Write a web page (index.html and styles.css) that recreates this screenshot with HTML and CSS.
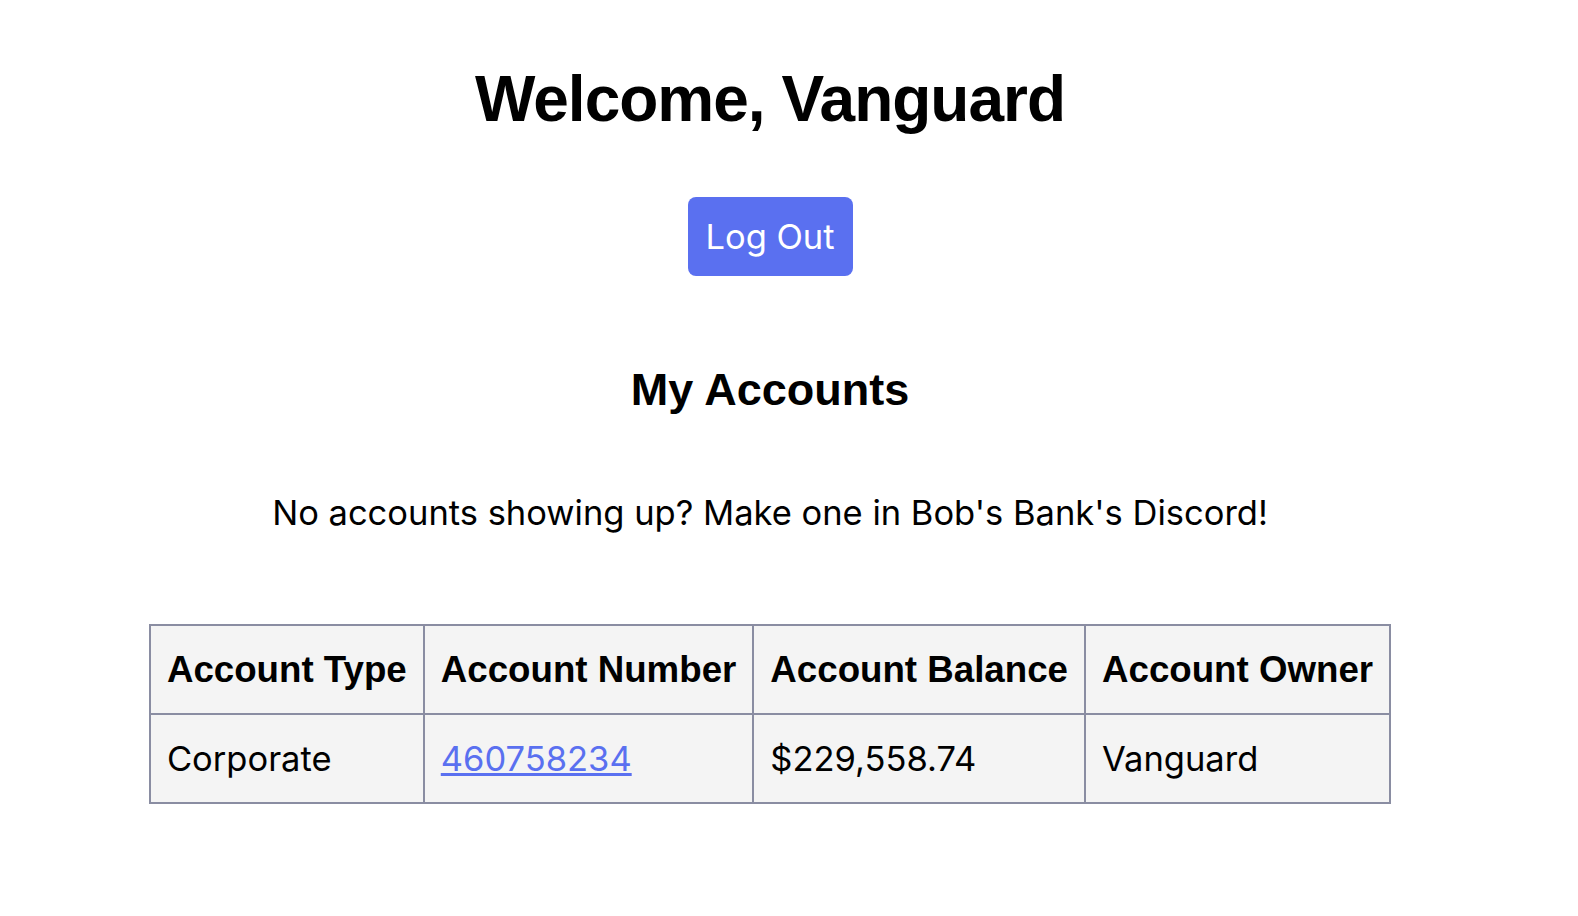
FILE: index.html
```html
<!DOCTYPE html>
<html lang="en">
<head>
    <meta charset="UTF-8">
    <meta name="viewport" content="width=device-width, initial-scale=1.0">
    <title>Bob's Bank - Dashboard</title>
    <link rel="stylesheet" href="styles.css">
</head>
<body>
    <div class="container">
        <h1>Welcome, Vanguard</h1>
        <button class="logout">Log Out</button>
        <h2>My Accounts</h2>
        <p class="note">No accounts showing up? Make one in Bob's Bank's Discord!</p>
        <table>
            <thead>
                <tr>
                    <th>Account Type</th>
                    <th>Account Number</th>
                    <th>Account Balance</th>
                    <th>Account Owner</th>
                </tr>
            </thead>
            <tbody>
                <tr>
                    <td>Corporate</td>
                    <td><a href="#">460758234</a></td>
                    <td>$229,558.74</td>
                    <td>Vanguard</td>
                </tr>
            </tbody>
        </table>
    </div>
</body>
</html>
```

FILE: styles.css
```css
body {
    font-family: Inter, "Liberation Sans", sans-serif;
    margin: 0;
    background-color: #ffffff;
    color: #000000;
}
.container {
    display: flex;
    flex-direction: column;
    align-items: center;
    padding-top: 60px;
    padding-right: 38px;
}
h1, h2, th {
    font-family: "Liberation Sans", Arial, sans-serif;
    font-weight: 700;
}
h1 {
    font-size: 64px;
    letter-spacing: -1px;
    margin: 0;
    line-height: 78px;
}
.logout {
    margin-top: 59px;
    width: 165px;
    height: 79px;
    font-family: Inter, sans-serif;
    font-size: 34.5px;
    color: white;
    background-color: #5a70f0;
    border: none;
    border-radius: 8px;
    cursor: pointer;
}
h2 {
    font-size: 45px;
    margin: 90px 0 0;
    line-height: 48px;
}
.note {
    font-size: 34.5px;
    margin: 79px 0 0;
    line-height: 40px;
}
table {
    margin-top: 91px;
    border-collapse: collapse;
    background-color: #f4f4f4;
}
th, td {
    border: 2px solid #8a8da2;
    padding: 24px 16px;
    font-size: 34.5px;
    text-align: left;
    line-height: 39px;
}
th {
    font-size: 36.7px;
}
a {
    color: #5a70f0;
}
```
